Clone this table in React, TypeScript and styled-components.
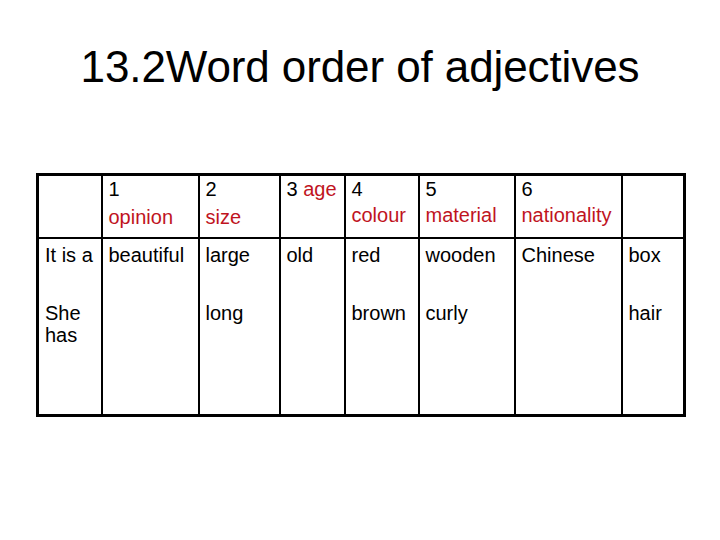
import React from "react";
import styled, { createGlobalStyle } from "styled-components";

const Global = createGlobalStyle`
  html, body { margin: 0; padding: 0; background: #ffffff; }
  body { font-family: "Liberation Sans", Arial, sans-serif; color: #000; }
`;

const Page = styled.div`
  width: 720px;
  height: 540px;
  background: #fff;
  overflow: hidden;
`;

const Title = styled.h1`
  margin: 42px 0 0 0;
  font-size: 44px;
  font-weight: normal;
  line-height: 50px;
  text-align: center;
  letter-spacing: -0.1px;
`;

const TableWrap = styled.div`
  padding: 81px 0 0 36px;
`;

const Grid = styled.table`
  border-collapse: collapse;
  border: 3px solid #000;
  table-layout: fixed;
  width: 647px;
  font-size: 20px;
`;

const HeadCell = styled.td`
  border: 2px solid #000;
  height: 63px;
  padding: 0 6px;
  vertical-align: top;
  line-height: 26px;
  box-sizing: border-box;
`;

const BodyCell = styled.td`
  border: 2px solid #000;
  height: 178px;
  padding: 5px 6px 0 6px;
  vertical-align: top;
  line-height: 22px;
  box-sizing: border-box;
`;

const Label = styled.span<{ $drop?: number }>`
  display: block;
  color: #c0141e;
  margin-top: ${(p) => p.$drop ?? 0}px;
`;

const Inline = styled.span`
  color: #c0141e;
`;

const Line = styled.div<{ $second?: boolean }>`
  margin-top: ${(p) => (p.$second ? 36 : 0)}px;
`;

const widths = [64, 97, 81, 65, 74, 96, 107, 63];

type Col = { num?: string; label?: string; drop?: number; inline?: boolean };

const header: Col[] = [
  {},
  { num: "1", label: "opinion", drop: 2 },
  { num: "2", label: "size", drop: 2 },
  { num: "3", label: "age", inline: true },
  { num: "4", label: "colour" },
  { num: "5", label: "material" },
  { num: "6", label: "nationality" },
  {},
];

const rowA = ["It is a", "beautiful", "large", "old", "red", "wooden", "Chinese", "box"];
const rowB = ["She has", "", "long", "", "brown", "curly", "", "hair"];

export default function App() {
  return (
    <Page>
      <Global />
      <Title>13.2Word order of adjectives</Title>
      <TableWrap>
        <Grid>
          <colgroup>
            {widths.map((w, i) => (
              <col key={i} style={{ width: w }} />
            ))}
          </colgroup>
          <tbody>
            <tr>
              {header.map((h, i) => (
                <HeadCell key={i}>
                  {h.inline ? (
                    <>
                      {h.num} <Inline>{h.label}</Inline>
                    </>
                  ) : (
                    <>
                      {h.num && <div>{h.num}</div>}
                      {h.label && <Label $drop={h.drop}>{h.label}</Label>}
                    </>
                  )}
                </HeadCell>
              ))}
            </tr>
            <tr>
              {rowA.map((a, i) => (
                <BodyCell key={i}>
                  <Line>{a}</Line>
                  {rowB[i] && <Line $second>{rowB[i]}</Line>}
                </BodyCell>
              ))}
            </tr>
          </tbody>
        </Grid>
      </TableWrap>
    </Page>
  );
}
